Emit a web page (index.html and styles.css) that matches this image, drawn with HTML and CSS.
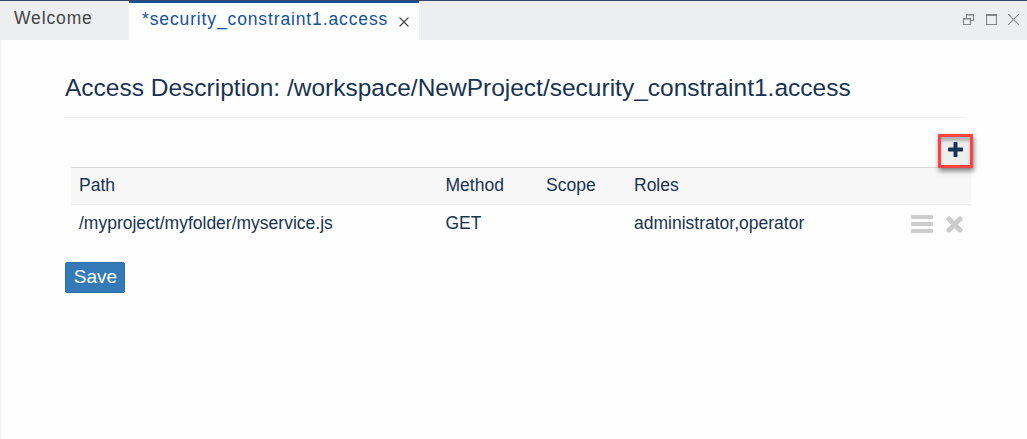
FILE: index.html
```html
<!DOCTYPE html>
<html lang="en">
<head>
<meta charset="utf-8">
<title>Access Description</title>
<link rel="stylesheet" href="styles.css">
</head>
<body>
<header class="tabs">
  <div class="tab">Welcome</div>
  <div class="tab active">
    <span>*security_constraint1.access</span>
    <svg class="close" width="10" height="10" viewBox="0 0 10 10"><path d="M.5.5l9 9M9.5.5l-9 9" fill="none" stroke="#444" stroke-width="1.1"/></svg>
  </div>
  <div class="window-tools">
    <svg width="11" height="11" viewBox="0 0 11 11" fill="none" stroke="#858585"><path d="M3.5 4V.5h7v6H8M.5 4.5h7v6h-7z" stroke-width="1.2"/><path d="M3 .8h8M0 4.800h8" stroke-width="1.6"/></svg>
    <svg width="11" height="11" viewBox="0 0 11 11" fill="none" stroke="#858585"><path d="M.5.5h10v10H.5z" stroke-width="1.2"/><path d="M0 1h11" stroke-width="2"/></svg>
    <svg class="last" width="11" height="11" viewBox="0 0 11 11" fill="none" stroke="#8f8f8f"><path d="M0 0l11 11M11 0L0 11" stroke-width="1.1"/></svg>
  </div>
</header>
<main class="editor">
  <h1 class="title">Access Description: /workspace/NewProject/security_constraint1.access</h1>
  <div class="toolbar">
    <button class="add" aria-label="Add"><svg width="15" height="15" viewBox="0 0 15 15"><path d="M6 0h3l.5.5v5h5l.5.5v3l-.5.5h-5v5L9 15H6l-.5-.5v-5h-5L0 9V6l.5-.5h5v-5z" fill="#173557"/></svg></button>
  </div>
  <div class="table">
    <div class="row head"><span>Path</span><span>Method</span><span>Scope</span><span>Roles</span><span></span></div>
    <div class="row">
      <span>/myproject/myfolder/myservice.js</span><span>GET</span><span></span><span>administrator,operator</span>
      <span class="actions">
        <svg width="22" height="18" viewBox="0 0 22 18" fill="#ccc"><rect width="22" height="4" rx="1"/><rect y="7" width="22" height="4" rx="1"/><rect y="14" width="22" height="4" rx="1"/></svg>
        <svg class="remove" width="17" height="17" viewBox="0 0 17 17"><path d="M3 3l11 11M14 3L3 14" stroke="#ccc" stroke-width="5" stroke-linecap="round"/></svg>
      </span>
    </div>
  </div>
  <button class="save">Save</button>
</main>
</body>
</html>
```
FILE: styles.css
```css
* { box-sizing: border-box; }
body {
  margin: 0;
  height: 439px;
  background: #fefefe;
  color: #173451;
  font: 17.5px/25px "Liberation Sans", Arial, sans-serif;
  overflow: hidden;
}
.tabs {
  display: flex;
  height: 40px;
  border-top: 1px solid #34496a;
  background: #edeef0;
}
.tab {
  width: 129px;
  padding: 5px 0 0 14px;
  color: #454545;
  letter-spacing: .87px;
  white-space: nowrap;
}
.tab.active {
  display: flex;
  width: 290px;
  height: 40px;
  padding: 4px 0 0 13px;
  border-top: 2px solid #15519d;
  background: #fefefe;
  color: #15519d;
}
.close { margin: 10px 0 0 11px; }
.window-tools {
  display: flex;
  gap: 12px;
  margin: 13px 8px 0 auto;
}
.window-tools .last { margin-left: -1px; }
.editor {
  height: 399px;
  padding: 30px 62px 0 64px;
  border-left: 1px solid #edeef0;
}
.title {
  width: 900px;
  height: 48px;
  margin: 0;
  border-bottom: 1px solid #eee;
  font-size: 24.5px;
  font-weight: 400;
  line-height: 36px;
  white-space: nowrap;
}
.toolbar {
  display: flex;
  width: 908px;
  height: 49px;
  padding-top: 16px;
  justify-content: flex-end;
}
.add {
  position: relative;
  display: flex;
  align-items: flex-start;
  width: 35px;
  height: 34px;
  padding: 5px 0 0 7px;
  border: 3px solid #fa4444;
  background: #eee;
  box-shadow: 1px 3px 5px rgba(0, 0, 0, .5), inset 0 4px 3px rgba(0, 0, 0, .25);
}
.add svg { display: block; }
.table {
  width: 900px;
  margin-left: 6px;
  border-top: 1px solid #d6d6d6;
}
.row {
  display: grid;
  grid-template-columns: 366.5px 100.5px 88px 277px 1fr;
  height: 38px;
  padding: 6px 0 0 8px;
}
.head {
  height: 37px;
  padding-top: 5px;
  border-bottom: 1px solid #ebebeb;
  background: #f7f7f7;
}
.actions {
  display: flex;
  gap: 13px;
  padding-top: 4px;
}
.remove { margin-top: 1px; }
.save {
  display: block;
  width: 60px;
  height: 31px;
  margin-top: 19px;
  padding: 0 0 2px 1px;
  border: 1px solid #2e6da4;
  border-radius: 2px;
  background: #337ab7;
  color: #fff;
  font: 19px/27px "Liberation Sans", Arial, sans-serif;
}
```
